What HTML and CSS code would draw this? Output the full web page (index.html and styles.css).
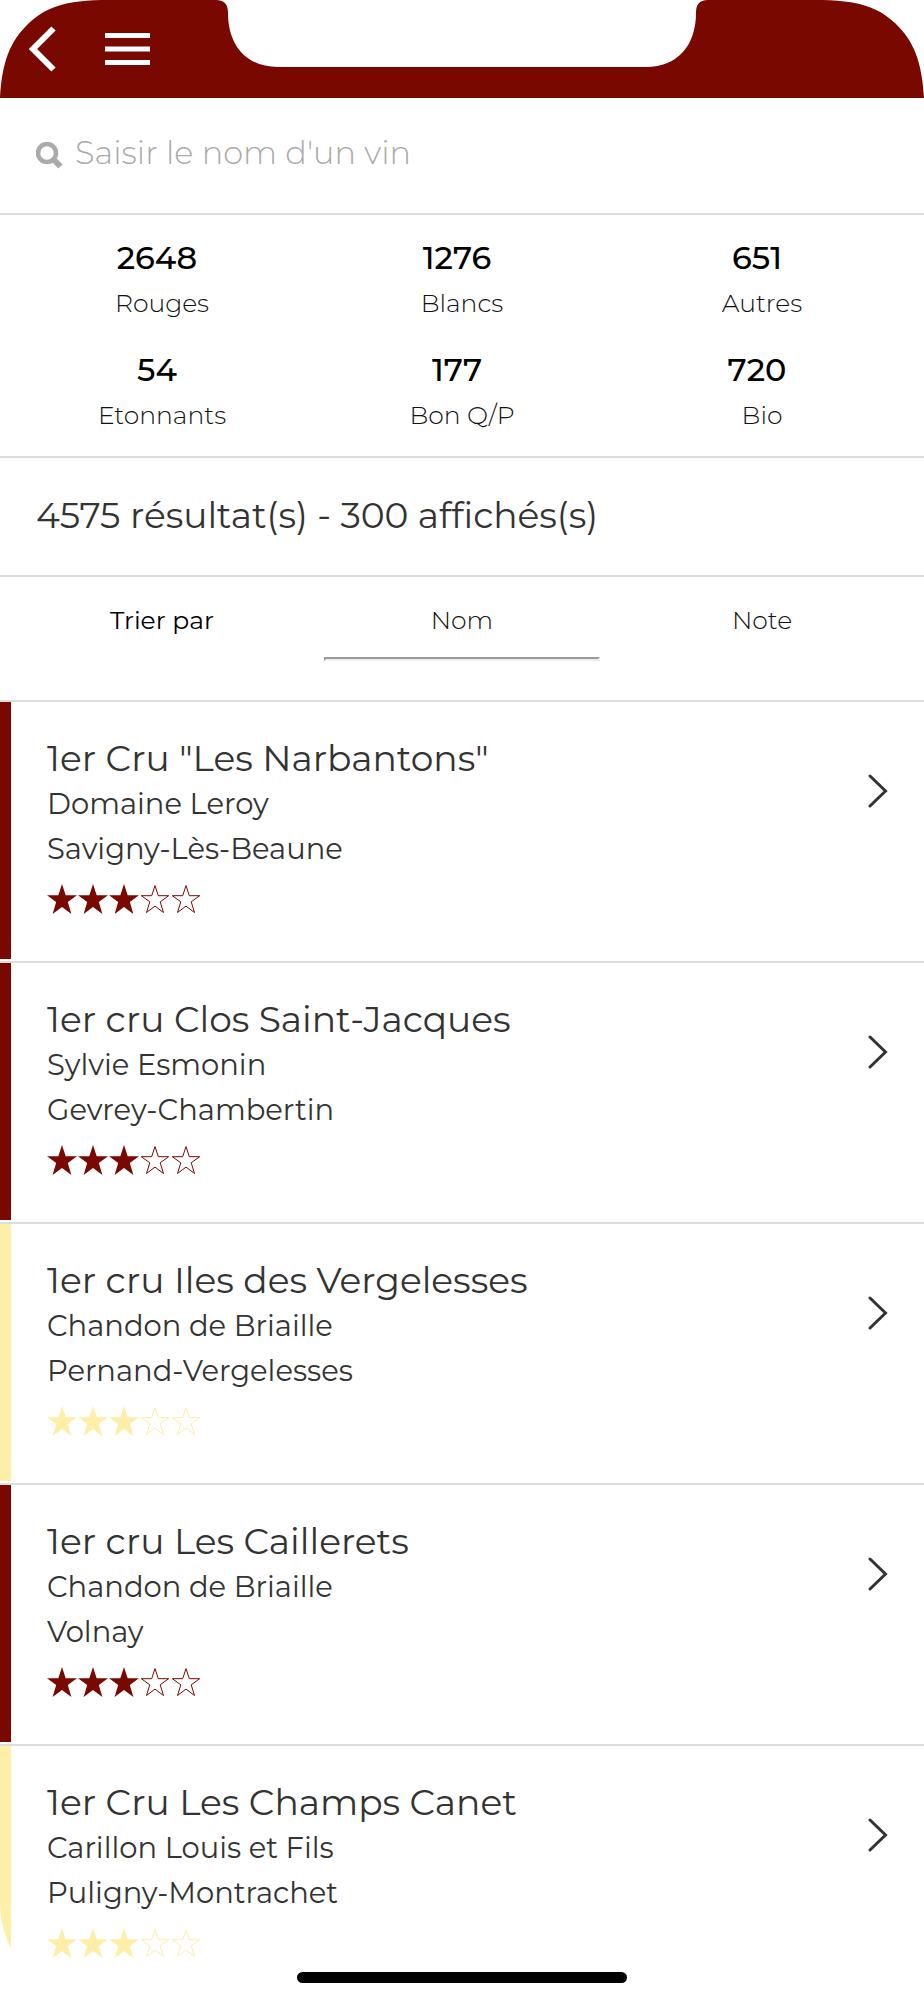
FILE: index.html
```
<!DOCTYPE html>
<html lang="fr">
<head>
    <meta charset="UTF-8">
    <meta name="viewport" content="width=device-width, initial-scale=1.0">
    <title>Liste des vins</title>
    <link rel="stylesheet" href="styles.css">
</head>
<body>
    <svg class="sprite" aria-hidden="true">
        <symbol id="star" viewBox="0 0 30 30"><path d="M15 0l3.7 11.2H30l-9.2 6.9L24.4 30 15 22.9 5.6 30l3.6-11.9L0 11.2h11.3z"/></symbol>
        <symbol id="star-empty" viewBox="0 0 30 30"><path d="M15 1.600l3.300 10.100h10.400l-8.500 6.100 3.300 10.700-8.500-6.400-8.500 6.400 3.300-10.700-8.500-6.100h10.400z" fill="none" stroke="currentColor" stroke-width="1"/></symbol>
        <symbol id="chevron" viewBox="0 0 20 34"><path d="M2 2l15.500 15L2 32" fill="none" stroke="currentColor" stroke-width="3" stroke-linecap="round"/></symbol>
    </svg>
    <div class="phone">
        <header class="topbar">
            <button class="icon-btn" aria-label="Retour">
                <svg width="28" height="46" viewBox="0 0 28 46"><path d="M25.500 2.500L5 23l20.500 20.500" fill="none" stroke="#fff" stroke-width="6"/></svg>
            </button>
            <button class="icon-btn" aria-label="Menu">
                <svg width="45" height="34" viewBox="0 0 45 34"><path d="M0 3.500h45M0 17h45M0 30.500h45" stroke="#fff" stroke-width="5"/></svg>
            </button>
            <svg class="notch" width="492" height="67" viewBox="0 0 492 67" aria-hidden="true"><path d="M0 0C9 0 12 5 12 13C12 45 30 67 62 67H430C462 67 480 45 480 13C480 5 483 0 492 0Z" fill="#fff"/></svg>
            <svg class="corner" width="110" height="98" viewBox="0 0 110 98" aria-hidden="true"><path d="M0 0H110C62 0 46 8 29 23C10 41 2 62 0 98Z" fill="#fff"/></svg>
            <svg class="corner corner-right" width="110" height="98" viewBox="0 0 110 98" aria-hidden="true"><path d="M0 0H110C62 0 46 8 29 23C10 41 2 62 0 98Z" fill="#fff"/></svg>
        </header>

        <form class="search">
            <label for="vin" aria-label="Rechercher">
                <svg width="27" height="27" viewBox="0 0 27 27"><circle cx="11" cy="11" r="9" fill="none" stroke="#aaa" stroke-width="4.500"/><path d="M17 17l7.500 7.500" stroke="#aaa" stroke-width="6"/></svg>
            </label>
            <input type="text" id="vin" placeholder="Saisir le nom d'un vin">
        </form>

        <section class="stats">
            <button class="stat"><b>2648</b><span>Rouges</span></button>
            <button class="stat"><b>1276</b><span>Blancs</span></button>
            <button class="stat"><b>651</b><span>Autres</span></button>
            <button class="stat"><b>54</b><span>Etonnants</span></button>
            <button class="stat"><b>177</b><span>Bon Q/P</span></button>
            <button class="stat"><b>720</b><span>Bio</span></button>
        </section>

        <p class="results">4575 résultat(s) - 300 affichés(s)</p>

        <div class="sort">
            <span class="sort-label">Trier par</span>
            <button class="sort-btn active">Nom</button>
            <button class="sort-btn">Note</button>
        </div>

        <ul class="wines">
            <li>
                <a class="wine rouge" href="#">
                    <div class="info">
                        <h2>1er Cru "Les Narbantons"</h2>
                        <p>Domaine Leroy</p>
                        <p>Savigny-Lès-Beaune</p>
                        <div class="stars" role="img" aria-label="3 sur 5"><svg><use href="#star"/></svg><svg><use href="#star"/></svg><svg><use href="#star"/></svg><svg><use href="#star-empty"/></svg><svg><use href="#star-empty"/></svg></div>
                    </div>
                    <svg class="chevron"><use href="#chevron"/></svg>
                </a>
            </li>
            <li>
                <a class="wine rouge" href="#">
                    <div class="info">
                        <h2>1er cru Clos Saint-Jacques</h2>
                        <p>Sylvie Esmonin</p>
                        <p>Gevrey-Chambertin</p>
                        <div class="stars" role="img" aria-label="3 sur 5"><svg><use href="#star"/></svg><svg><use href="#star"/></svg><svg><use href="#star"/></svg><svg><use href="#star-empty"/></svg><svg><use href="#star-empty"/></svg></div>
                    </div>
                    <svg class="chevron"><use href="#chevron"/></svg>
                </a>
            </li>
            <li>
                <a class="wine blanc" href="#">
                    <div class="info">
                        <h2>1er cru Iles des Vergelesses</h2>
                        <p>Chandon de Briaille</p>
                        <p>Pernand-Vergelesses</p>
                        <div class="stars" role="img" aria-label="3 sur 5"><svg><use href="#star"/></svg><svg><use href="#star"/></svg><svg><use href="#star"/></svg><svg><use href="#star-empty"/></svg><svg><use href="#star-empty"/></svg></div>
                    </div>
                    <svg class="chevron"><use href="#chevron"/></svg>
                </a>
            </li>
            <li>
                <a class="wine rouge" href="#">
                    <div class="info">
                        <h2>1er cru Les Caillerets</h2>
                        <p>Chandon de Briaille</p>
                        <p>Volnay</p>
                        <div class="stars" role="img" aria-label="3 sur 5"><svg><use href="#star"/></svg><svg><use href="#star"/></svg><svg><use href="#star"/></svg><svg><use href="#star-empty"/></svg><svg><use href="#star-empty"/></svg></div>
                    </div>
                    <svg class="chevron"><use href="#chevron"/></svg>
                </a>
            </li>
            <li>
                <a class="wine blanc" href="#">
                    <div class="info">
                        <h2>1er Cru Les Champs Canet</h2>
                        <p>Carillon Louis et Fils</p>
                        <p>Puligny-Montrachet</p>
                        <div class="stars" role="img" aria-label="3 sur 5"><svg><use href="#star"/></svg><svg><use href="#star"/></svg><svg><use href="#star"/></svg><svg><use href="#star-empty"/></svg><svg><use href="#star-empty"/></svg></div>
                    </div>
                    <svg class="chevron"><use href="#chevron"/></svg>
                </a>
            </li>
        </ul>
        <div class="home-bar"></div>
    </div>
</body>
</html>
```
FILE: styles.css
```
* {
    box-sizing: border-box;
}
body {
    margin: 0;
    background: #fff;
    color: #333;
    font-family: Montserrat, Inter, sans-serif;
    font-variant-ligatures: none;
}
button {
    padding: 0;
    border: none;
    background: none;
    font-family: inherit;
    color: inherit;
    cursor: pointer;
}
svg {
    display: block;
}
.sprite {
    display: none;
}
.phone {
    position: relative;
    height: 100vh;
    overflow: hidden;
    border-radius: 0 0 92px 92px / 0 0 98px 98px;
}

/* Barre du haut */
.topbar {
    position: relative;
    display: flex;
    align-items: center;
    gap: 49px;
    height: 98px;
    padding-left: 28px;
    background: #780800;
}
.icon-btn {
    position: relative;
    z-index: 1;
}
.notch {
    position: absolute;
    top: 0;
    left: 50%;
    transform: translateX(-50%);
}
.corner {
    position: absolute;
    top: 0;
    left: 0;
}
.corner-right {
    left: auto;
    right: 0;
    transform: scaleX(-1);
}

/* Recherche */
.search {
    display: flex;
    align-items: center;
    gap: 12px;
    height: 117px;
    padding: 0 36px;
    border-bottom: 2px solid #ddd;
}
.search input {
    flex: 1;
    height: 60px;
    padding: 0 0 6px;
    border: none;
    outline: none;
    background: none;
    font-family: inherit;
    font-size: 32px;
    font-weight: 300;
}
.search input::placeholder {
    color: #aaa;
}

/* Compteurs */
.stats {
    display: grid;
    grid-template-columns: repeat(3, 1fr);
    row-gap: 22px;
    padding: 20px 12px 19px;
    border-bottom: 2px solid #ddd;
}
.stat {
    display: flex;
    flex-direction: column;
    align-items: center;
    font-size: 25px;
    font-weight: 300;
    line-height: 44px;
    color: #111;
}
.stat b {
    padding-right: 10px;
    font-size: 32px;
    font-weight: 500;
    line-height: 46px;
    color: #000;
}

.results {
    margin: 0;
    padding: 33px 36px 36px;
    border-bottom: 2px solid #ddd;
    font-size: 36px;
    line-height: 48px;
}

/* Tri */
.sort {
    display: grid;
    grid-template-columns: repeat(3, 1fr);
    padding: 23px 12px 39px;
    font-size: 25px;
    line-height: 40px;
    text-align: center;
    color: #111;
}
.sort-label {
    color: #000;
}
.sort-btn {
    margin: 0 12px;
    font-size: 25px;
    font-weight: 300;
    line-height: 40px;
}
.sort-btn::after {
    content: "";
    display: block;
    margin-top: 17px;
    border: 2px solid transparent;
}
.sort-btn.active::after {
    border: 2px inset #eee;
}

/* Liste */
.wines {
    margin: 0;
    padding: 0;
    list-style: none;
}
.wines li {
    padding-bottom: 2px;
    border-top: 2px solid #ddd;
}
.wine {
    display: flex;
    justify-content: space-between;
    padding: 34px 36px 45px;
    border-left: 11px solid;
    text-decoration: none;
}
.rouge {
    color: #780800;
}
.blanc {
    color: #fdeea8;
}
.info h2 {
    margin: 0;
    font-size: 36px;
    font-weight: 400;
    line-height: 45px;
    color: #333;
}
.info p {
    margin: 0;
    font-size: 29px;
    line-height: 45px;
    color: #333;
}
.stars {
    display: flex;
    gap: 1px;
    padding-top: 13px;
}
.stars svg {
    width: 30px;
    height: 30px;
    fill: currentColor;
}
.chevron {
    width: 20px;
    height: 34px;
    margin-top: 38px;
    color: #333;
}

.home-bar {
    position: absolute;
    bottom: 17px;
    left: 50%;
    width: 330px;
    height: 11px;
    margin-left: -165px;
    border-radius: 6px;
    background: #000;
}
```
